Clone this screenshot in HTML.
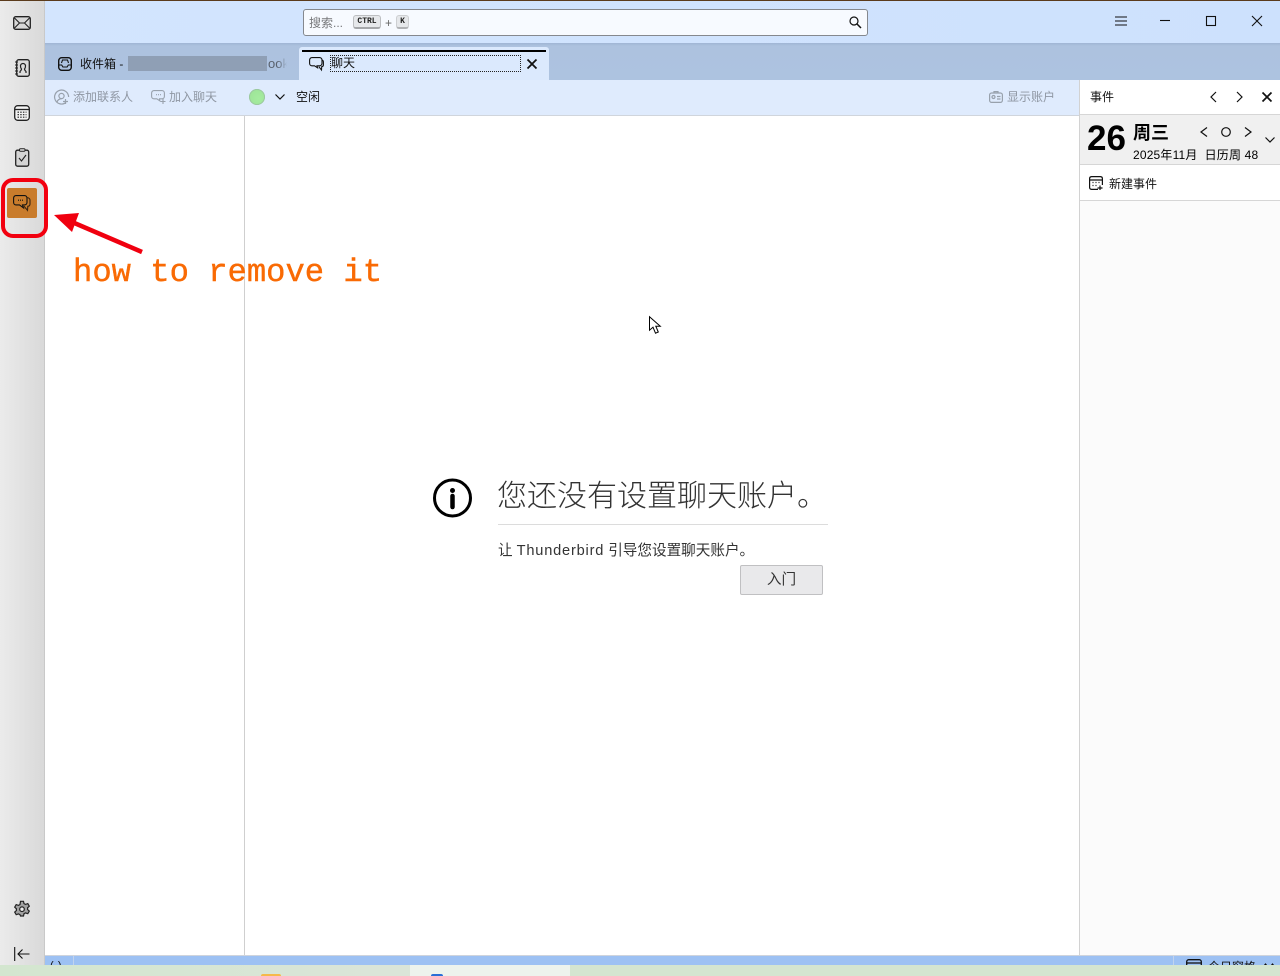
<!DOCTYPE html>
<html lang="zh">
<head>
<meta charset="utf-8">
<title>聊天</title>
<style>
html,body{margin:0;padding:0;width:1280px;height:976px;overflow:hidden;background:#fff}
body{position:relative;font-family:"Liberation Sans","Noto Sans CJK SC",sans-serif;font-size:12px;color:#111}
.a{position:absolute}
.t{position:absolute;white-space:nowrap;line-height:16px}
svg{position:absolute;overflow:visible;fill:none;stroke:#111}
.g{color:#8f97a3}
</style>
</head>
<body>
<!-- top line -->
<div class="a" style="left:0;top:0;width:1280px;height:1px;background:#5b3b1c;z-index:3"></div>
<!-- sidebar -->
<div class="a" style="left:0;top:0;width:44px;height:976px;background:linear-gradient(90deg,#ebebeb,#d9d9d9)"></div>
<div class="a" style="left:44px;top:0;width:1px;height:976px;background:#c9c9c9"></div>
<!-- title bar -->
<div class="a" style="left:45px;top:1px;width:1235px;height:42px;background:linear-gradient(90deg,#d3e5fe,#cde1fd)"></div>
<!-- tab bar -->
<div class="a" style="left:45px;top:43px;width:1235px;height:37px;background:linear-gradient(180deg,#9fb5d4 0,#adc2df 3px,#adc3e0 100%)"></div>
<!-- toolbar -->
<div class="a" style="left:45px;top:80px;width:1035px;height:35px;background:#dfebfd"></div>
<div class="a" style="left:45px;top:115px;width:1035px;height:1px;background:#d0d5dc"></div>
<!-- column divider -->
<div class="a" style="left:244px;top:116px;width:1px;height:840px;background:#cfcfcf"></div>

<!-- search -->
<div class="a" style="left:303px;top:9px;width:563px;height:25px;background:#f7faff;border:1px solid #85888e;border-radius:3px"></div>
<div class="t" style="left:309px;top:15px;color:#77787b;font-size:12px">搜索...</div>
<div class="a" style="left:353px;top:15px;width:28px;height:14px;background:#e6e8eb;border:1px solid #bcbec1;border-bottom:2px solid #a5a7aa;border-radius:3px;box-sizing:border-box;font:bold 8px/11px 'Liberation Mono',monospace;text-align:center;color:#222">CTRL</div>
<div class="t" style="left:385px;top:15px;color:#666;font-size:12px">+</div>
<div class="a" style="left:396px;top:15px;width:13px;height:14px;background:#e6e8eb;border:1px solid #cdcfd2;border-bottom:2px solid #b0b2b5;border-radius:3px;box-sizing:border-box;font:bold 8px/11px 'Liberation Mono',monospace;text-align:center;color:#222">K</div>
<svg style="left:848px;top:15px" width="14" height="14" viewBox="0 0 14 14" stroke-width="1.200"><circle cx="6" cy="6" r="4"/><path d="M9 9l4 4" stroke-width="1.500"/></svg>

<!-- window controls -->
<svg style="left:1115px;top:16px" width="12" height="12" viewBox="0 0 12 12" stroke-width="1.100"><path d="M0 1h12M0 5h12M0 9h12"/></svg>
<svg style="left:1160px;top:15px" width="11" height="11" viewBox="0 0 11 11" stroke-width="1.100"><path d="M0 5.500h10"/></svg>
<svg style="left:1206px;top:16px" width="10" height="10" viewBox="0 0 10 10" stroke-width="1.100"><rect x=".5" y=".5" width="9" height="9"/></svg>
<svg style="left:1252px;top:16px" width="10" height="10" viewBox="0 0 10 10" stroke-width="1.100"><path d="M0 0l10 10M10 0L0 10"/></svg>

<!-- inbox tab -->
<svg style="left:58px;top:57px" width="14" height="14" viewBox="0 0 14 14"><rect x=".7" y=".7" width="12.600" height="12.600" rx="3" stroke-width="1.400"/><path d="M.7 8h3l1.200 2h4.200l1.200-2h3M3.500 6l1-3h5l1 3" stroke-width="1.100"/></svg>
<div class="t" style="left:80px;top:56px">收件箱 -</div>
<div class="a" style="left:128px;top:56px;width:139px;height:15px;background:#8f9fb5"></div>
<div class="t" style="left:268px;top:56px;color:#59616d;font-size:13px;width:19px;overflow:hidden;-webkit-mask-image:linear-gradient(90deg,#000 50%,transparent)">ook</div>

<!-- chat tab -->
<div class="a" style="left:299px;top:47px;width:250px;height:33px;background:#dbe9fd;border-radius:3px 3px 0 0"></div>
<div class="a" style="left:302px;top:50px;width:244px;height:2px;background:#000"></div>
<svg style="left:309px;top:57px" width="15" height="14" viewBox="0 0 15 14" stroke-width="1.100"><path d="M3 .6h7.500A2.400 2.400 0 0 1 13 3v3.400a2.400 2.400 0 0 1-2.500 2.400H8l.5 2-3-2H3A2.400 2.400 0 0 1 .6 6.400V3A2.400 2.400 0 0 1 3 .6z"/><path d="M13 3c1 .3 1.400 1 1.400 2v3c0 1-.7 1.500-1.700 1.700l-.2 3.300-2.700-3.300"/></svg>
<div class="a" style="left:330px;top:55px;width:191px;height:17px;box-sizing:border-box;border:1px dotted #222"></div>
<div class="t" style="left:331px;top:55px;font-size:12px">聊天</div>
<svg style="left:527px;top:59px" width="10" height="10" viewBox="0 0 10 10" stroke-width="1.800"><path d="M.5.500l9 9M9.500.500l-9 9"/></svg>

<!-- toolbar items -->
<svg style="left:54px;top:89px;stroke:#98a1ac" width="16" height="16" viewBox="0 0 16 16" stroke-width="1.200"><path d="M12 13.500A7 7 0 1 1 14.600 8"/><circle cx="7.500" cy="7" r="2.600"/><path d="M3 13c1-3 3-3.200 4.500-3.200M11.500 10v5M9 12.500h5"/></svg>
<div class="t g" style="left:73px;top:89px">添加联系人</div>
<svg style="left:151px;top:90px;stroke:#98a1ac" width="16" height="15" viewBox="0 0 16 15" stroke-width="1.100"><path d="M3 .6h8A2.400 2.400 0 0 1 13.400 3v3.400A2.400 2.400 0 0 1 11 8.800H8.500l.3 2-3-2H3A2.400 2.400 0 0 1 .6 6.400V3A2.400 2.400 0 0 1 3 .6z"/><path d="M12 9v5M9.500 11.500h5M5 4.700h1M7 4.700h1M9 4.700h1"/></svg>
<div class="t g" style="left:169px;top:89px">加入聊天</div>
<div class="a" style="left:249px;top:89px;width:16px;height:16px;border-radius:50%;background:radial-gradient(circle at 60% 60%,#a5ec9f,#9be296);box-shadow:inset 0 0 0 1px #9cc8a0"></div>
<svg style="left:275px;top:94px" width="10" height="6" viewBox="0 0 10 6" stroke-width="1.200"><path d="M.5.500l4.500 4.500L9.500.500"/></svg>
<div class="t" style="left:296px;top:89px">空闲</div>
<svg style="left:989px;top:91px;stroke:#98a1ac" width="14" height="12" viewBox="0 0 14 12" stroke-width="1.200"><rect x=".6" y="2" width="12.800" height="9.400" rx="2"/><path d="M5 2V.6h4V2M8 5.500h3.500M8 8h3.500"/><circle cx="4.500" cy="6" r="1.500"/></svg>
<div class="t g" style="left:1007px;top:89px">显示账户</div>

<!-- right panel -->
<div class="a" style="left:1079px;top:80px;width:1px;height:876px;background:#d2d2d2"></div>
<div class="a" style="left:1080px;top:80px;width:200px;height:34px;background:#fff"></div>
<div class="a" style="left:1080px;top:114px;width:200px;height:1px;background:#d6d6d6"></div>
<div class="a" style="left:1080px;top:115px;width:200px;height:49px;background:#f0f0f0"></div>
<div class="a" style="left:1080px;top:164px;width:200px;height:1px;background:#d6d6d6"></div>
<div class="a" style="left:1080px;top:165px;width:200px;height:35px;background:#fff"></div>
<div class="a" style="left:1080px;top:200px;width:200px;height:1px;background:#d6d6d6"></div>
<div class="a" style="left:1080px;top:201px;width:200px;height:755px;background:#fbfbfb"></div>
<div class="t" style="left:1090px;top:89px">事件</div>
<svg style="left:1210px;top:91px" width="7" height="12" viewBox="0 0 7 12" stroke-width="1.200"><path d="M6 1L1 6l5 5"/></svg>
<svg style="left:1236px;top:91px" width="7" height="12" viewBox="0 0 7 12" stroke-width="1.200"><path d="M1 1l5 5-5 5"/></svg>
<svg style="left:1262px;top:92px" width="10" height="10" viewBox="0 0 10 10" stroke-width="1.700"><path d="M.5.500l9 9M9.500.500l-9 9"/></svg>
<div class="t" style="left:1087px;top:119px;font:bold 35px/40px 'Liberation Sans',sans-serif;color:#000">26</div>
<div class="t" style="left:1133px;top:123px;font-size:18px;font-weight:bold;line-height:20px;color:#000">周三</div>
<div class="t" style="left:1133px;top:147px;font-size:12px;color:#000;letter-spacing:.18px">2025年11月&nbsp;&nbsp;日历周 48</div>
<svg style="left:1200px;top:127px" width="8" height="10" viewBox="0 0 8 10" stroke-width="1.200"><path d="M7 .5L1 5l6 4.500"/></svg>
<svg style="left:1221px;top:127px" width="10" height="10" viewBox="0 0 10 10" stroke-width="1.200"><circle cx="5" cy="5" r="4.300"/></svg>
<svg style="left:1244px;top:127px" width="8" height="10" viewBox="0 0 8 10" stroke-width="1.200"><path d="M1 .5L7 5 1 9.500"/></svg>
<svg style="left:1265px;top:137px" width="10" height="6" viewBox="0 0 10 6" stroke-width="1.200"><path d="M.5.500l4.500 4.500L9.500.500"/></svg>
<svg style="left:1089px;top:176px" width="14" height="14" viewBox="0 0 14 14" stroke-width="1.200"><path d="M9 13.400H2.500A2 2 0 0 1 .6 11.500V2.500A2 2 0 0 1 2.500.6h9a2 2 0 0 1 1.900 1.900V9M.6 4h12.800M3.500 6.500h1M6.500 6.500h1M9.500 6.500h1M3.500 9.500h1M6.500 9.500h1M11 9.500v4.500M8.500 12h5"/></svg>
<div class="t" style="left:1109px;top:176px">新建事件</div>

<!-- sidebar icons -->
<svg style="left:13px;top:16px;stroke:#222" width="18" height="14" viewBox="0 0 18 14"><rect x=".7" y=".7" width="16.600" height="12.600" rx="2" fill="#d8d8d8" stroke-width="1.300"/><path d="M1.500 2l5 5-5 5M16.500 2l-5 5 5 5M6.500 7h5" stroke-width="1.100"/></svg>
<svg style="left:14px;top:59px;stroke:#222" width="16" height="18" viewBox="0 0 16 18"><rect x="2.700" y=".7" width="12.600" height="16.600" rx="2" fill="#dcdcdc" stroke-width="1.300"/><path d="M1 3h3M1 6h3M1 9h3M1 12h3M1 15h3" stroke-width="1"/><path d="M6 14v-1.500c1-1 1.500-1.500 1.500-2.500-1-1-1-2-1-3a2.500 2.500 0 0 1 5 0c0 1 0 2-1 3 0 1 .5 1.500 1.500 2.500V14" stroke-width="1.200"/></svg>
<svg style="left:14px;top:105px;stroke:#222" width="16" height="16" viewBox="0 0 16 16"><rect x=".7" y=".7" width="14.600" height="14.600" rx="3" fill="#f4f4f4" stroke-width="1.300"/><path d="M.7 4.500h14.600" stroke-width="1.300"/><path d="M3.500 7.200h9M3.500 9.700h9M3.500 12.200h9" stroke-dasharray="1.500 1.200" stroke-width="1.200"/></svg>
<svg style="left:15px;top:148px;stroke:#222" width="15" height="19" viewBox="0 0 15 19"><rect x=".7" y="2.200" width="13" height="16" rx="1.800" fill="#d4d4d4" stroke-width="1.300"/><rect x="4.500" y=".7" width="5.500" height="2.500" rx="1" fill="#e4e4e4" stroke-width="1"/><path d="M4 10l2.500 3L11 7" stroke-width="1.100"/></svg>

<!-- active chat icon -->
<div class="a" style="left:7px;top:188px;width:30px;height:30px;background:#c97c2c;border-radius:2px"></div>
<svg style="left:13px;top:195px" width="18" height="17" viewBox="0 0 18 17" stroke-width="1.100"><path d="M3 .6h8.500A2.400 2.400 0 0 1 14 3v4.500a2.400 2.400 0 0 1-2.500 2.400H9.500l1 3-4-3H3A2.400 2.400 0 0 1 .6 7.500V3A2.400 2.400 0 0 1 3 .6z"/><path d="M14 2.500c1.800.3 3 1 3 2.600V9c0 1.500-1 2.200-2.200 2.300l-.3 4-3.500-4.200" stroke="#3a2410"/><path d="M5 5.200h1M7 5.200h1M9 5.200h1"/></svg>

<!-- bottom icons -->
<svg style="left:13px;top:900px;stroke:#222" width="18" height="18" viewBox="0 0 18 18" stroke-width="1.200"><path d="M7.500.8h3l.5 2.300 1.500.8 2.300-.8 1.500 2.600-1.700 1.600v1.700l1.700 1.600-1.500 2.600-2.300-.8-1.500.8-.5 2.300h-3L7 14.200l-1.500-.8-2.300.8-1.500-2.600L3.400 10V8.300L1.700 6.700l1.500-2.600 2.300.8L7 4z" transform="translate(0 .5)" fill="#a2a2a2"/><circle cx="9" cy="9.200" r="2.300" fill="#eee"/></svg>
<svg style="left:14px;top:947px" width="16" height="14" viewBox="0 0 16 14" stroke-width="1.100"><path d="M.7 0v14M15.500 7H4M8.500 2.500L4 7l4.500 4.500"/></svg>

<!-- info message -->
<svg style="left:433px;top:478px;stroke:#000" width="40" height="40" viewBox="0 0 40 40" stroke-width="3"><circle cx="19.500" cy="20" r="18"/><circle cx="19.500" cy="12.500" r="2.500" fill="#000" stroke="none"/><path d="M19.500 18v11" stroke-width="4.500" stroke-linecap="round"/></svg>
<div class="t" style="left:497px;top:478px;font-size:30px;line-height:38px;font-weight:300;color:#333">您还没有设置聊天账户。</div>
<div class="a" style="left:498px;top:524px;width:330px;height:1px;background:#dcdcdc"></div>
<div class="t" style="left:498px;top:542px;font-size:14.600px;line-height:18px;color:#333">让 <span style="letter-spacing:.8px">Thunderbird</span> 引导您设置聊天账户。</div>
<div class="a" style="left:740px;top:565px;width:83px;height:30px;box-sizing:border-box;background:#e9e9eb;border:1px solid #c0c0c2;border-radius:2px;text-align:center;font-size:14.600px;line-height:29px;color:#333">入门</div>

<!-- cursor -->
<svg style="left:649px;top:316px;stroke:#000" width="14" height="19" viewBox="0 0 14 19" stroke-width="1"><path d="M.5.700v13.500l3.500-3 2.500 6 2.800-1.200-2.500-5.800h4.500z" fill="#fff"/></svg>

<!-- status bar -->
<div class="a" style="left:45px;top:955px;width:1235px;height:10px;background:#9dc1f3;border-top:1px solid #cfd4dc;box-sizing:border-box"></div>
<div class="a" style="left:73px;top:956px;width:1px;height:9px;background:#c1d3ee"></div>
<div class="a" style="left:1173px;top:956px;width:1px;height:9px;background:#c1d3ee"></div>
<div class="a" style="left:45px;top:956px;width:1235px;height:9px;overflow:hidden">
  <div class="t" style="left:5px;top:2px;font-size:11px">(ₒ)</div>
  <svg style="left:1141px;top:3px" width="16" height="12" viewBox="0 0 16 12" stroke-width="1.300"><rect x=".7" y=".7" width="14.600" height="11" rx="2"/><path d="M.7 4h14.600"/></svg>
  <div class="t" style="left:1163px;top:3px;font-size:12px">今日窗格</div>
  <svg style="left:1218px;top:6px" width="12" height="6" viewBox="0 0 12 6" stroke-width="1.100"><path d="M0 5l2.500-3L5 5M7 5l2.500-3L12 5"/></svg>
</div>

<!-- desktop strip -->
<div class="a" style="left:0;top:965px;width:1280px;height:11px;background:linear-gradient(90deg,#d3e6cf,#dae5d8 30%,#dde3d2 100%);z-index:2"></div>
<div class="a" style="left:410px;top:965px;width:160px;height:11px;background:#edf3ed;z-index:2"></div>
<div class="a" style="left:570px;top:965px;width:710px;height:11px;background:#d4e5d0;z-index:2"></div>
<div class="a" style="left:261px;top:974px;width:20px;height:2px;background:#f5b94a;border-radius:2px 2px 0 0;z-index:3"></div>
<div class="a" style="left:431px;top:974px;width:12px;height:2px;background:#2a6fd6;border-radius:6px 6px 0 0;z-index:3"></div>

<!-- annotations -->
<div class="a" style="left:1px;top:178px;width:47px;height:60px;box-sizing:border-box;border:4px solid #f2000f;border-radius:12px;z-index:4"></div>
<svg style="left:0;top:0;z-index:4" width="200" height="300" viewBox="0 0 200 300"><path d="M142 252L72 222" stroke="#f0000f" stroke-width="4.500" fill="none"/><path d="M54 215l25-2-7 19z" fill="#f0000f" stroke="none"/></svg>
<div class="t" style="left:73px;top:254px;font:32.200px/38px 'Liberation Mono',monospace;color:#f96a04;-webkit-text-stroke:.4px #f96a04;z-index:4">how to remove it</div>
</body>
</html>
